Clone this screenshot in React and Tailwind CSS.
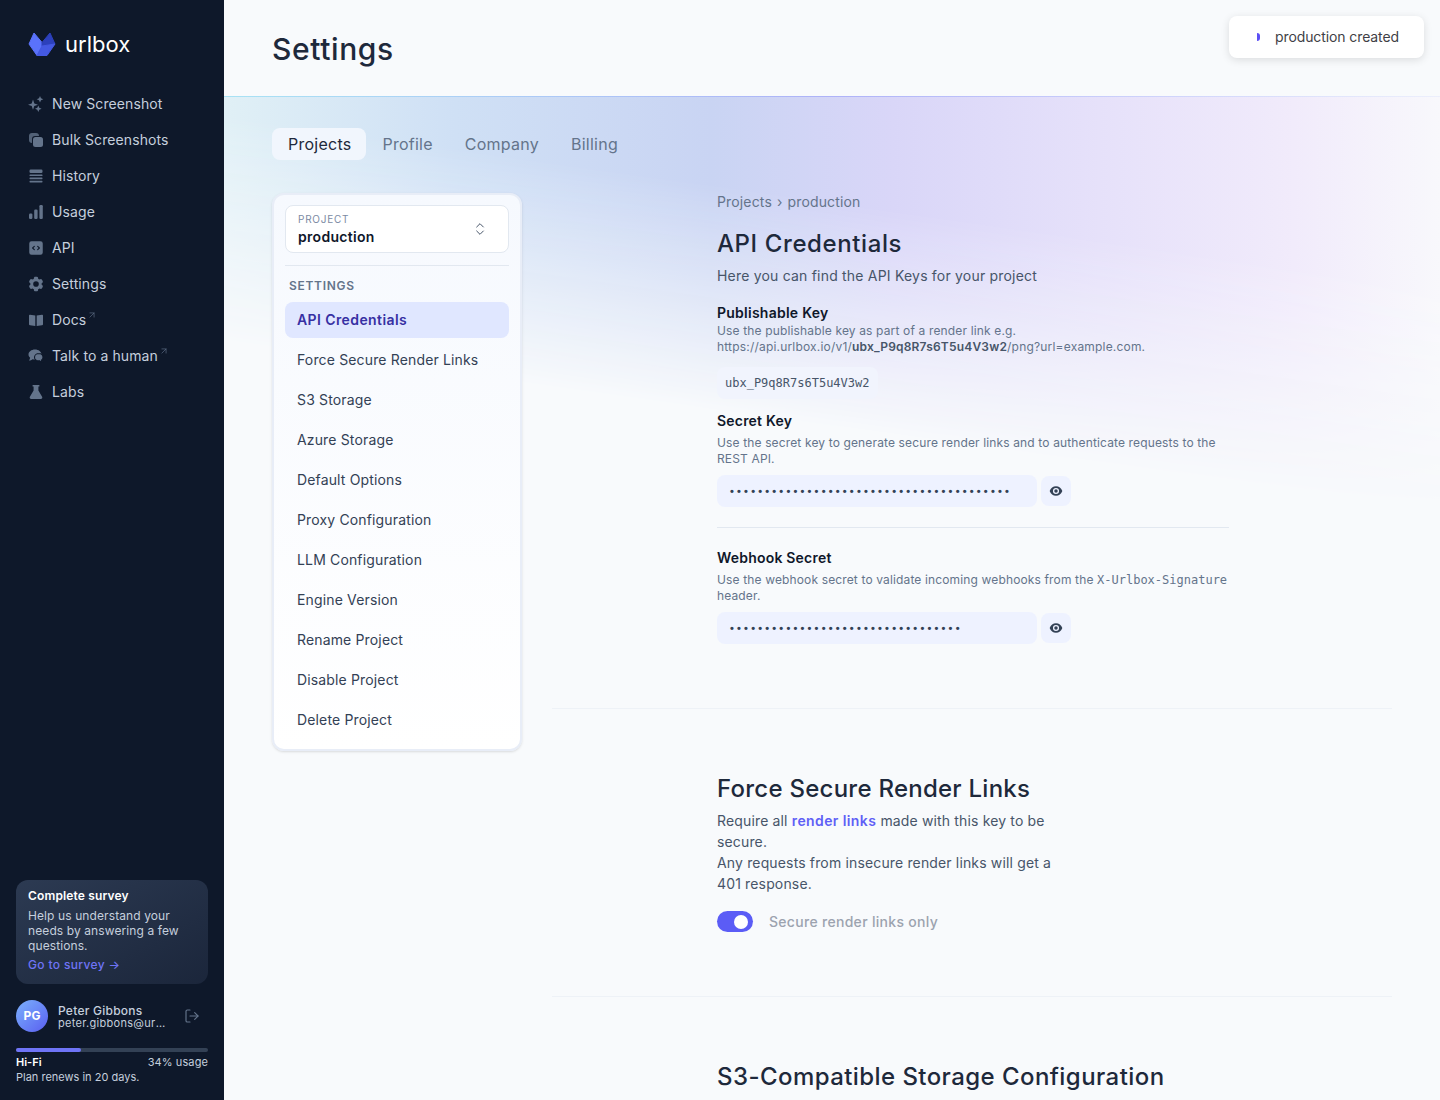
import { ChevronsUpDown, ArrowUpRight, LogOut } from 'lucide-react';
import { HiCodeBracketSquare, HiCog6Tooth, HiEye } from 'react-icons/hi2';

function SparkIcon({ className }) {
  return (
    <svg viewBox="0 0 16 16" className={className} fill="currentColor">
      <path d="M5 3.600 6.300 7.400 10 8.700 6.300 10 5 13.800 3.700 10 0 8.700 3.700 7.400Z" />
      <path d="M12 0 13 2.300 15.300 3.300 13 4.300 12 6.600 11 4.300 8.700 3.300 11 2.300Z" />
      <path d="M10.300 9.400 11.300 11.700 13.600 12.700 11.300 13.700 10.300 16 9.300 13.700 7 12.700 9.300 11.700Z" />
    </svg>
  );
}

function StackIcon({ className }) {
  return (
    <svg viewBox="0 0 16 16" className={className} fill="currentColor">
      <rect x="1" y="1" width="10" height="10" rx="3" opacity=".8" />
      <rect x="4" y="4" width="11.500" height="11.500" rx="3" fill="#0e182a" />
      <rect x="5" y="5" width="10" height="10" rx="2.500" />
    </svg>
  );
}

function HistoryIcon({ className }) {
  return (
    <svg viewBox="0 0 16 16" className={className} fill="currentColor">
      <rect x="1.500" y="1.500" width="13" height="3.400" rx="1.200" />
      <rect x="1.500" y="6.400" width="13" height="1.600" rx=".6" />
      <rect x="1.500" y="9.600" width="13" height="1.600" rx=".6" />
      <rect x="1.500" y="12.800" width="13" height="1.600" rx=".6" />
    </svg>
  );
}

function UsageIcon({ className }) {
  return (
    <svg viewBox="0 0 16 16" className={className} fill="currentColor">
      <rect x="1" y="9.500" width="3.400" height="5.500" rx="1.200" />
      <rect x="6.200" y="5.500" width="3.400" height="9.500" rx="1.200" />
      <rect x="11.400" y="1" width="3.400" height="14" rx="1.200" />
    </svg>
  );
}

function BookIcon({ className }) {
  return (
    <svg viewBox="0 0 16 16" className={className} fill="currentColor">
      <path d="M1 3.500C1 3 1.400 2.600 2 2.700L7.300 3.400V14L2 13.300C1.400 13.200 1 12.800 1 12.300Z" />
      <path d="M15 3.500C15 3 14.600 2.600 14 2.700L8.700 3.400V14L14 13.300C14.600 13.200 15 12.800 15 12.300Z" />
    </svg>
  );
}

function TalkIcon({ className }) {
  return (
    <svg viewBox="0 0 16 16" className={className} fill="currentColor">
      <path d="M7 1.500C3.400 1.500.5 3.700.5 6.500c0 1.300.6 2.400 1.600 3.300-.1 1-.6 2-1.100 2.700 1.400 0 2.700-.6 3.600-1.300.7.2 1.500.3 2.400.3 3.600 0 6.500-2.200 6.500-5S10.600 1.500 7 1.500Z" />
      <path
        d="M11 5.500c-2.500 0-4.500 1.600-4.500 3.700s2 3.700 4.500 3.700c.2 0 .4 0 .7-.1.6.7 1.500 1.200 2.600 1.300-.4-.5-.7-1.200-.8-2 1-.7 1.500-1.700 1.500-2.900 0-2.100-1.500-3.700-4-3.700Z"
        stroke="#0e182a"
        strokeWidth="1.100"
      />
    </svg>
  );
}

function LabsIcon({ className }) {
  return (
    <svg viewBox="0 0 16 16" className={className} fill="currentColor">
      <path d="M4.600 1h6.800v1.500h-1v4l3.700 6.200c.6 1.100-.1 2.300-1.300 2.300H3.200c-1.200 0-1.900-1.200-1.300-2.300l3.700-6.200v-4h-1Z" />
    </svg>
  );
}

function Logo() {
  return (
    <svg viewBox="0 0 28 24" className="w-7 h-6" strokeLinejoin="round">
      <path d="M6 1 14 10.500V14L9 23.500 1 12Z" fill="#5a72fb" stroke="#5a72fb" />
      <path d="M22 1 27 12 14 14V10.500Z" fill="#2c40bb" stroke="#2c40bb" />
      <path d="M14 14 27 12 19 23.500H9Z" fill="#4459e2" stroke="#4459e2" />
    </svg>
  );
}

const navItems = [
  { label: 'New Screenshot', icon: SparkIcon },
  { label: 'Bulk Screenshots', icon: StackIcon },
  { label: 'History', icon: HistoryIcon },
  { label: 'Usage', icon: UsageIcon },
  { label: 'API', icon: HiCodeBracketSquare, large: true },
  { label: 'Settings', icon: HiCog6Tooth, large: true },
  { label: 'Docs', icon: BookIcon, external: true },
  { label: 'Talk to a human', icon: TalkIcon, external: true },
  { label: 'Labs', icon: LabsIcon },
];

const settingsLinks = [
  'API Credentials',
  'Force Secure Render Links',
  'S3 Storage',
  'Azure Storage',
  'Default Options',
  'Proxy Configuration',
  'LLM Configuration',
  'Engine Version',
  'Rename Project',
  'Disable Project',
  'Delete Project',
];

const tabs = ['Projects', 'Profile', 'Company', 'Billing'];

function Sidebar() {
  return (
    <aside className="w-[224px] shrink-0 h-[1100px] bg-[#0e182a] flex flex-col">
      <div className="flex items-center gap-[9px] pl-7 pt-[2px] h-[86px]">
        <Logo />
        <span className="text-[22px] leading-6 text-white">urlbox</span>
      </div>
      <nav className="flex flex-col">
        {navItems.map(({ label, icon: Icon, external, large }) => (
          <div key={label} className="h-9 pl-7 flex items-center text-[#c5cfdd]">
            <Icon className={large ? 'w-[18px] h-[18px] -mx-px text-[#64748b] shrink-0' : 'w-4 h-4 text-[#64748b] shrink-0'} />
            <span className="ml-2 text-sm leading-5 tracking-[0.1px]">{label}</span>
            {external && <ArrowUpRight className="w-2.5 h-2.5 ml-[1px] mb-2.5 text-[#64748b]" strokeWidth={1.5} />}
          </div>
        ))}
      </nav>
      <div className="mt-auto px-4 pb-[15px]">
        <div className="rounded-xl bg-gradient-to-br from-[#2c3a52] to-[#1b263b] px-3 pt-2 pb-[11px]">
          <p className="text-xs leading-4 font-semibold text-white tracking-[0.15px]">Complete survey</p>
          <p className="mt-1 text-xs leading-[15px] text-[#c5cfdd] tracking-[0.1px]">
            Help us understand your needs by answering a few questions.
          </p>
          <p className="mt-1 text-xs leading-4 font-medium text-[#6f74f6] tracking-[0.35px]">Go to survey →</p>
        </div>
        <div className="mt-4 flex items-center">
          <div className="w-8 h-8 rounded-full bg-gradient-to-br from-[#7cb0fb] to-[#5b5cf0] flex items-center justify-center text-xs font-bold text-white">
            PG
          </div>
          <div className="ml-2.5 w-[110px] min-w-0 pt-[2px]">
            <p className="text-xs leading-[13px] font-medium text-[#c5cfdd] tracking-[0.25px]">Peter Gibbons</p>
            <p className="text-[11px] leading-[13px] text-[#c5cfdd] truncate tracking-[0.3px]">peter.gibbons@urlbox.com</p>
          </div>
          <LogOut className="ml-auto mr-[8px] w-4 h-4 text-[#64748b]" strokeWidth={1.75} />
        </div>
        <div className="mt-[16px] h-1 rounded-full bg-[#334155]">
          <div className="h-1 w-[34%] rounded-full bg-[#6f74f6]" />
        </div>
        <div className="mt-[3px] flex justify-between text-[11px] leading-[14px]">
          <span className="font-semibold text-white">Hi-Fi</span>
          <span className="text-[#c5cfdd] tracking-[0.1px]">34% usage</span>
        </div>
        <p className="text-[11px] leading-[16px] text-[#c5cfdd]">Plan renews in 20 days.</p>
      </div>
    </aside>
  );
}

function SecretField({ dots }) {
  return (
    <div className="mt-2 flex items-center gap-1">
      <div className="w-[320px] h-8 rounded-lg bg-[#eef2ff] pl-[13px] flex items-center text-[11px] tracking-[3.2px] text-[#334155] font-bold font-['Liberation_Sans',sans-serif]">
        {'•'.repeat(dots)}
      </div>
      <div className="w-[30px] h-[30px] rounded-lg bg-[#eef2ff] flex items-center justify-center">
        <HiEye className="w-3.5 h-3.5 text-[#334155]" />
      </div>
    </div>
  );
}

function SettingsCard() {
  return (
    <div className="w-[250px] h-[558px] shrink-0 rounded-xl border-2 border-[#e8edf7] bg-gradient-to-b from-[#f6f9fe] to-white p-[11px] pt-[10px] shadow-sm">
      <div className="h-12 rounded-lg border border-[#e2e8f0] bg-white pl-3 pr-[20px] flex items-center justify-between">
        <div>
          <p className="text-[10px] leading-3 tracking-[0.75px] text-[#7b8aa3] mt-0.5">PROJECT</p>
          <p className="text-sm leading-5 font-semibold text-[#0f172a] mt-0.5 tracking-[0.3px]">production</p>
        </div>
        <ChevronsUpDown className="w-4 h-4 text-[#475569]" strokeWidth={1.5} />
      </div>
      <div className="mt-3 h-px bg-[#e2e8f0]" />
      <p className="mt-3 pl-1 text-xs leading-4 font-semibold tracking-[0.7px] text-[#64748b]">SETTINGS</p>
      <div className="mt-2 flex flex-col gap-1">
        {settingsLinks.map((link, i) => (
          <div
            key={link}
            className={
              i === 0
                ? 'h-9 rounded-lg bg-[#e0e7ff] px-3 flex items-center text-sm font-semibold text-[#3730a3] tracking-[0.4px]'
                : 'h-9 rounded-lg px-3 flex items-center text-sm text-[#334155] tracking-[0.15px]'
            }
          >
            {link}
          </div>
        ))}
      </div>
    </div>
  );
}

function ApiCredentials() {
  return (
    <section className="w-[512px] ml-[165px] -mt-px">
      <p className="text-sm leading-5 text-[#64748b] tracking-[0.15px]">
        Projects<span className="mx-[5px]">›</span>production
      </p>
      <h2 className="mt-4 text-2xl leading-8 font-medium text-[#1e293b] tracking-[0.6px]">API Credentials</h2>
      <p className="mt-[6px] text-sm leading-5 text-[#475569] tracking-[0.2px]">Here you can find the API Keys for your project</p>
      <h3 className="mt-[19px] text-sm leading-4 font-semibold text-[#0f172a] tracking-[0.25px]">Publishable Key</h3>
      <p className="mt-[2px] text-xs leading-4 text-[#64748b] tracking-[0.15px]">
        Use the publishable key as part of a render link e.g.
        <br />
        <span className="tracking-[0.19px]">
          https://api.urlbox.io/v1/<strong className="font-semibold text-[#475569]">ubx_P9q8R7s6T5u4V3w2</strong>/png?url=example.com.
        </span>
      </p>
      <code className="mt-3 block w-fit h-8 rounded-lg bg-[#f1f4fd] px-2 text-xs leading-8 text-[#475569] font-['DejaVu_Sans_Mono',monospace]">
        ubx_P9q8R7s6T5u4V3w2
      </code>
      <h3 className="mt-[14px] text-sm leading-4 font-semibold text-[#0f172a] tracking-[0.2px]">Secret Key</h3>
      <p className="mt-[6px] text-xs leading-4 text-[#64748b] tracking-[0.14px]">
        Use the secret key to generate secure render links and to authenticate requests to the REST API.
      </p>
      <SecretField dots={40} />
      <div className="mt-5 h-px bg-[#e2e8f0]" />
      <h3 className="mt-[22px] text-sm leading-4 font-semibold text-[#0f172a] tracking-[0.2px]">Webhook Secret</h3>
      <p className="mt-[6px] text-xs leading-4 text-[#64748b] tracking-[0.14px]">
        Use the webhook secret to validate incoming webhooks from the{' '}
        <span className="font-['DejaVu_Sans_Mono',monospace] tracking-normal text-[#64748b]">X-Urlbox-Signature</span> header.
      </p>
      <SecretField dots={33} />
    </section>
  );
}

function ForceSecure() {
  return (
    <section className="w-[512px] ml-[165px] pt-16">
      <h2 className="text-2xl leading-8 font-medium text-[#1e293b] tracking-[0.25px]">Force Secure Render Links</h2>
      <p className="mt-[5px] w-[340px] text-sm leading-[21px] text-[#475569] tracking-[0.15px]">
        Require all <span className="font-semibold text-[#5f5ff6] tracking-[0.4px]">render links</span> made with this key to be secure.
        <br />
        Any requests from insecure render links will get a 401 response.
      </p>
      <div className="mt-[17px] flex items-center">
        <div className="w-9 h-[21px] rounded-full bg-[#5b5cf6] flex items-center justify-end pr-[5px]">
          <div className="w-[14px] h-[14px] rounded-full bg-white" />
        </div>
        <span className="ml-4 text-sm font-medium text-[#9ca3af] tracking-[0.3px]">Secure render links only</span>
      </div>
    </section>
  );
}

export default function App() {
  return (
    <div className="relative flex h-[1100px] overflow-hidden bg-[#f8fafc] font-['Inter',sans-serif]">
      <Sidebar />
      <main className="relative flex-1 min-w-0">
        <header className="h-[96px] pl-12 pt-[29px]">
          <h1 className="text-3xl leading-10 font-medium text-[#1e293b] tracking-[0.6px]">Settings</h1>
        </header>
        <div className="h-px bg-gradient-to-r from-[#a8e2f4] via-[#aeb2f8] to-[#eceffc]" />
        <div className="absolute left-0 right-0 top-[97px] h-[460px] bg-[linear-gradient(90deg,#e0f0f6_0%,#cfe0f5_19%,#c9d4f3_40%,#d9d6f8_55%,#e6e1fa_72%,#f1ebfb_88%,#f8f8fc_100%)] [mask-image:linear-gradient(188deg,#000_30%,transparent_66%)]" />
        <div className="relative px-12 pt-[31px]">
          <div className="flex items-center gap-2 h-8 text-base text-[#64748b] tracking-[0.25px]">
            {tabs.map((tab, i) => (
              <div
                key={tab}
                className={i === 0 ? 'h-8 pl-4 pr-[15px] rounded-lg bg-[#f1f6fd] text-[#1e293b] flex items-center' : 'h-8 px-2 flex items-center mr-2'}
              >
                {tab}
              </div>
            ))}
          </div>
          <div className="mt-[33px] flex gap-[30px]">
            <SettingsCard />
            <div className="flex-1 min-w-0">
              <ApiCredentials />
              <div className="mt-16 h-px bg-[#eef2f7]" />
              <ForceSecure />
              <div className="mt-16 h-px bg-[#eef2f7]" />
              <section className="w-[512px] ml-[165px] pt-16">
                <h2 className="text-2xl leading-8 font-medium text-[#1e293b] tracking-[0.43px]">S3-Compatible Storage Configuration</h2>
              </section>
            </div>
          </div>
        </div>
      </main>
      <div className="absolute top-4 right-4 w-[195px] h-[42px] rounded-lg bg-white shadow-[0_2px_8px_rgba(0,0,0,0.12)] flex items-center pl-[46px] text-sm text-[#3f3f46] tracking-[-0.1px]">
        <span className="absolute left-[28px] top-[17px] w-[3px] h-2 rounded-r-full bg-[#5b4ff5]" />
        production created
      </div>
    </div>
  );
}
